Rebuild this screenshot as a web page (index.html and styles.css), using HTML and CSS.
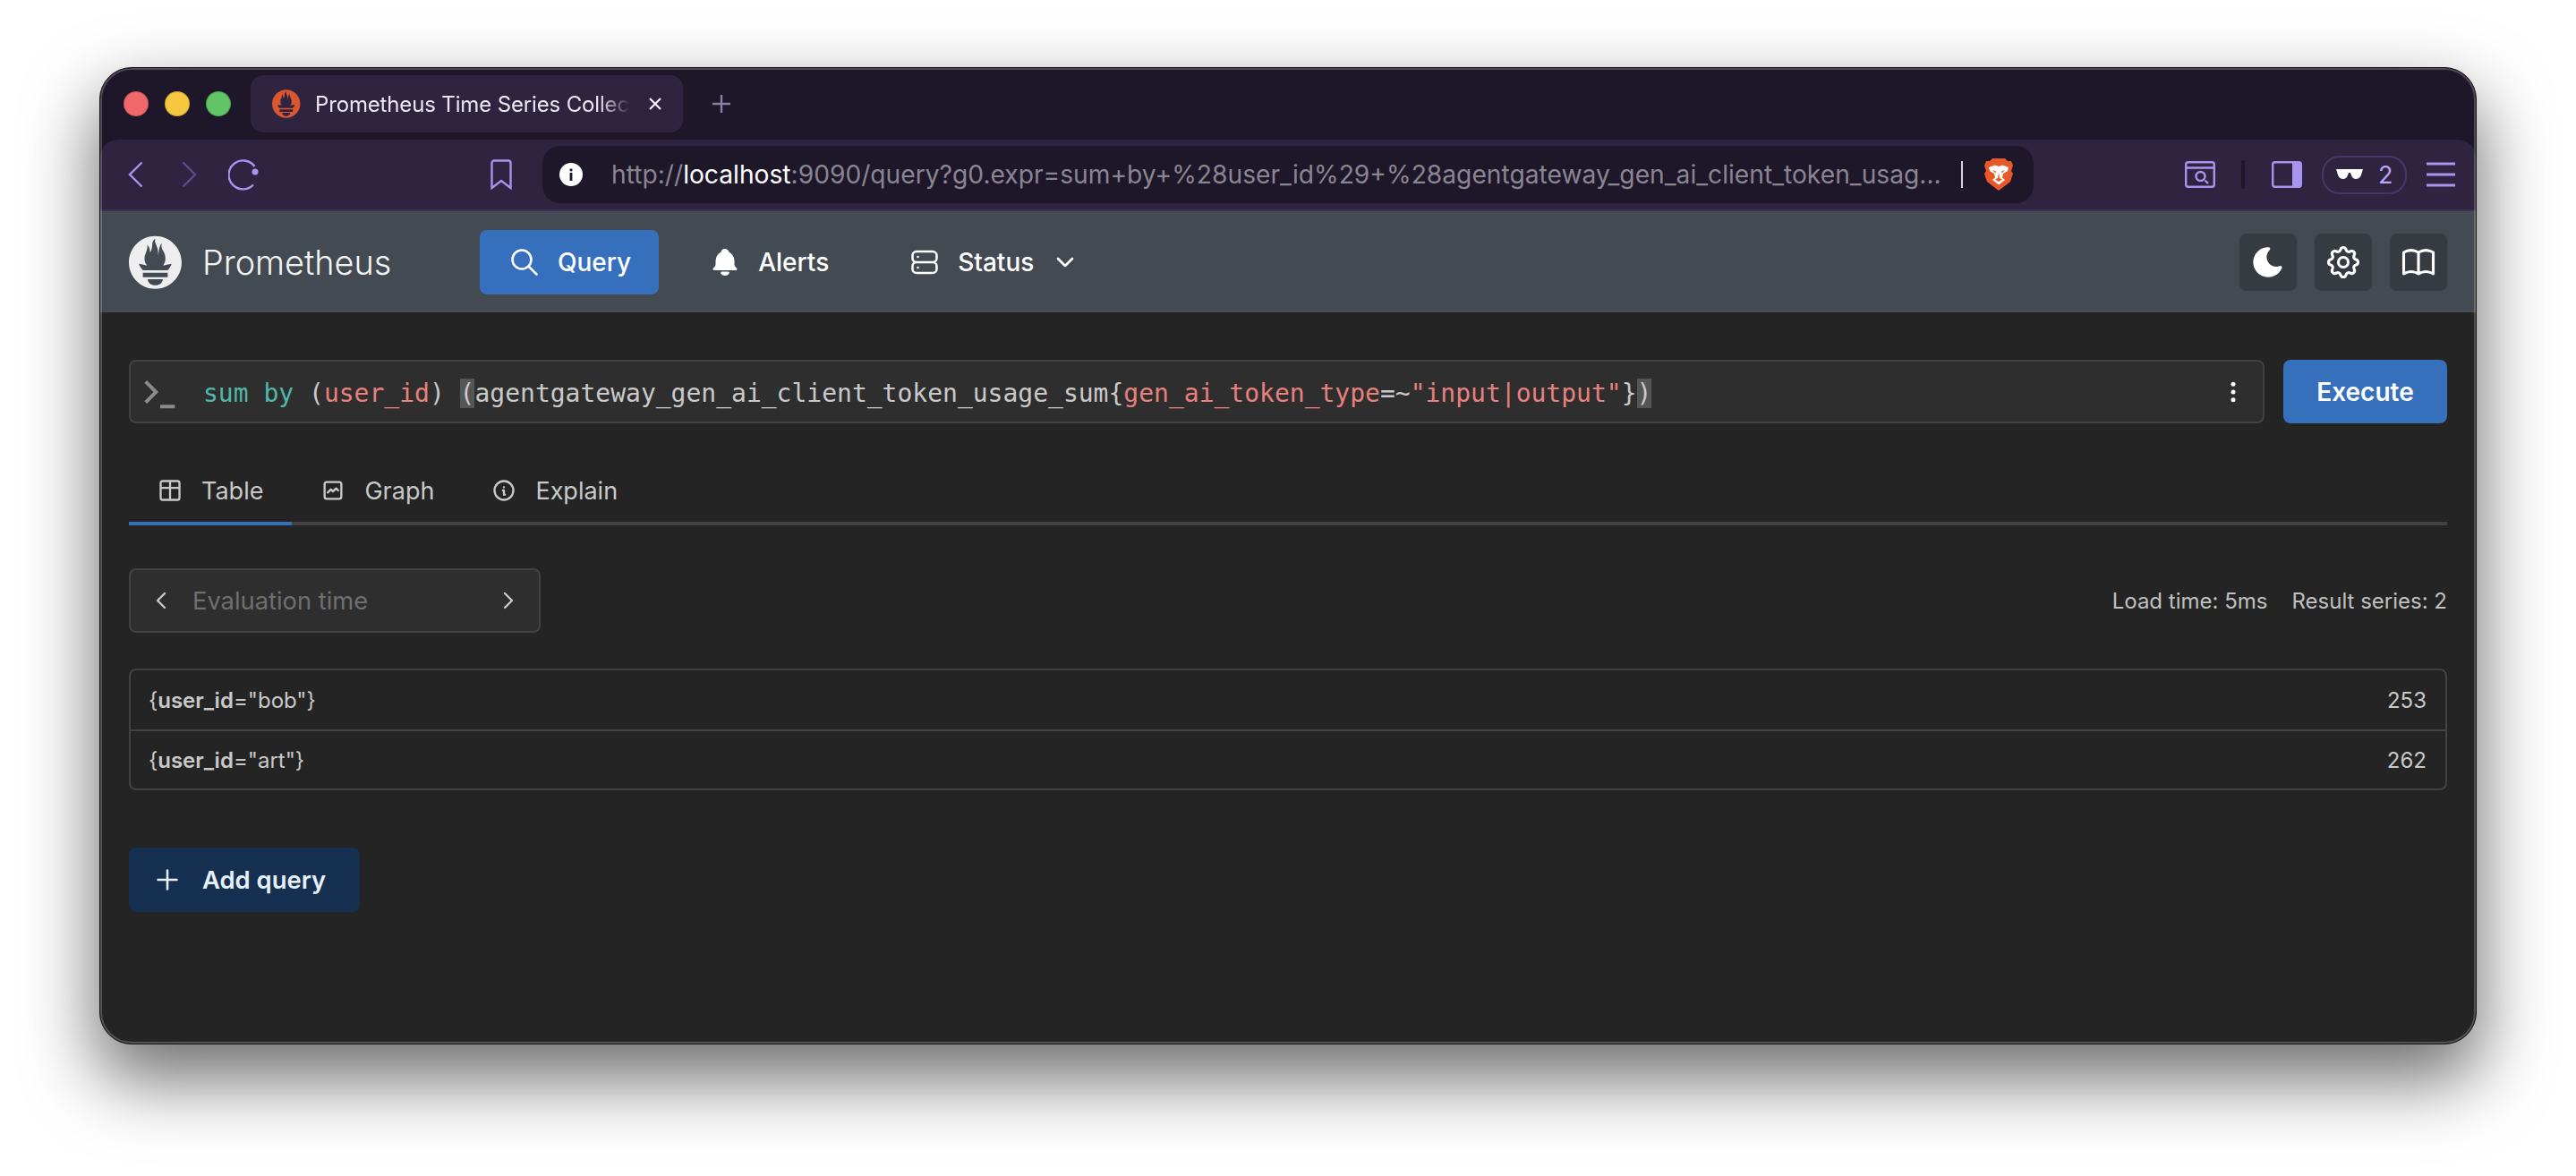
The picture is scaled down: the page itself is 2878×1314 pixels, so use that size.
FILE: index.html
```html
<!DOCTYPE html>
<html lang="en">
<head>
    <meta charset="UTF-8">
    <title>Prometheus Time Series Collection and Processing Server</title>
    <link rel="stylesheet" href="styles.css">
</head>
<body>
    <svg class="defs" width="0" height="0">
        <symbol id="prom" viewBox="0 0 115.333 114">
            <path fill-rule="evenodd" d="M56.667.667C25.372.667 0 26.036 0 57.332c0 31.295 25.372 56.666 56.667 56.666s56.666-25.371 56.666-56.666C113.333 26.036 87.961.667 56.667.667zm0 106.055c-8.904 0-16.123-5.948-16.123-13.283H72.79c0 7.334-7.219 13.283-16.123 13.283zM83.297 89.04H30.034V79.382h53.264v9.658zm-.191-14.629H30.186c-.176-.203-.356-.403-.526-.609-5.452-6.62-6.736-10.076-7.983-13.598-.021-.116 6.611 1.355 11.314 2.413 0 0 2.42.56 5.958 1.205-3.397-3.982-5.414-9.044-5.414-14.218 0-11.359 8.712-21.285 5.569-29.308 3.059.249 6.331 6.456 6.552 16.161 3.252-4.494 4.613-12.701 4.613-17.733 0-5.21 3.433-11.262 6.867-11.469-3.061 5.045.793 9.37 4.219 20.099 1.285 4.03 1.121 10.812 2.113 15.113.329-8.933 1.865-21.967 7.533-26.467-2.5 5.667.37 12.758 2.333 16.167 3.167 5.5 5.087 9.667 5.087 17.548 0 5.284-1.951 10.259-5.242 14.148 3.742-.702 6.326-1.335 6.326-1.335l12.152-2.371c.001-.001-1.765 7.261-8.55 14.254z"/>
        </symbol>
    </svg>

    <div class="window">
        <div class="tabstrip">
            <span class="light red"></span>
            <span class="light yellow"></span>
            <span class="light green"></span>
            <div class="tab">
                <svg class="favicon"><use href="#prom"/></svg>
                <span class="tab-title">Prometheus Time Series Collection and Processing Server</span>
                <svg class="tab-close" viewBox="0 0 16 16"><path d="M2 2l12 12M14 2L2 14"/></svg>
            </div>
            <svg class="tab-new" viewBox="0 0 22 22"><path d="M11 1v20M1 11h20"/></svg>
        </div>

        <div class="toolbar">
            <svg class="tb-back" viewBox="0 0 17 30"><path d="M15.5 1.5L2 15l13.5 13.5"/></svg>
            <svg class="tb-forward" viewBox="0 0 17 30"><path d="M1.5 1.5L15 15 1.5 28.5"/></svg>
            <svg class="tb-reload" viewBox="0 0 34 36">
                <path d="M29.5 9A16 16 0 1 0 28 29.5"/>
                <circle class="solid" cx="30" cy="15" r="3.5"/>
            </svg>
            <svg class="tb-bookmark" viewBox="0 0 24 34"><path d="M4 1.5h16a2.5 2.5 0 0 1 2.5 2.5v28L12 24 1.5 32V4A2.5 2.5 0 0 1 4 1.5z"/></svg>
            <div class="urlbar">
                <svg class="url-info" viewBox="0 0 26 26">
                    <circle cx="13" cy="13" r="13" fill="#fff"/>
                    <rect x="11.6" y="11" width="2.8" height="9" fill="#1e1629"/>
                    <rect x="11.6" y="6.5" width="2.8" height="2.8" fill="#1e1629"/>
                </svg>
                <span class="url-text">http://<b>localhost</b>:9090/query?g0.expr=sum+by+%28user_id%29+%28agentgateway_gen_ai_client_token_usag…</span>
                <span class="url-sep"></span>
                <svg class="url-brave" viewBox="0 0 32 36">
                    <path fill="#e8592a" d="M9 0h14l3 3 4 0 2 5-2 6 2 3-3 9-9 7-4 3-4-3-9-7-3-9 2-3-2-6 2-5 4 0z"/>
                    <path fill="#fff" d="M5 10l7-2.5 4 1.5 4-1.5 7 2.500-1 4-5 3-1 4.500 3 2.500-7 5.500-7-5.500 3-2.500-1-4.500-5-3z"/>
                    <path fill="#e8592a" d="M9 13l4 1.500-.5 2zM23 13l-4 1.500.5 2zM16 16l-1 6-3 1.500 4 2.500 4-2.500-3-1.500z"/>
                </svg>
            </div>
            <svg class="tb-find" viewBox="0 0 34 30">
                <rect x="1.2" y="1.2" width="31.6" height="27.6" rx="2.5"/>
                <path d="M1.2 7.5h31.6M22.500 21.500l3.500 3.500"/>
                <circle cx="17.500" cy="17" r="5"/>
            </svg>
            <span class="tb-sep"></span>
            <svg class="tb-sidebar" viewBox="0 0 34 30">
                <rect x="1.2" y="1.2" width="31.6" height="27.6" rx="2.5"/>
                <path class="solid" d="M23 1.2h7.3a2.5 2.5 0 0 1 2.5 2.5v22.6a2.5 2.5 0 0 1-2.5 2.5H23z"/>
            </svg>
            <div class="wallet-pill">
                <svg class="glasses" viewBox="0 0 30 12"><path d="M0 0h30l-1 3c-1 5-3 8-7 8s-5-4-6-7h-2c-1 3-2 7-6 7S2 8 1 3z"/></svg>
                <span>2</span>
            </div>
            <svg class="tb-menu" viewBox="0 0 32 28"><path d="M0 2h32M0 14h32M0 26h32"/></svg>
        </div>

        <nav class="app-nav">
            <svg class="brand-logo"><use href="#prom"/></svg>
            <span class="brand-name">Prometheus</span>
            <a class="nav-link active">
                <svg class="ic" viewBox="0 0 24 24"><path d="M3 10a7 7 0 1 0 14 0a7 7 0 1 0-14 0M21 21l-6-6"/></svg>
                Query
            </a>
            <a class="nav-link">
                <svg class="ic ic-fill" viewBox="0 0 24 24"><path d="M14.235 19c.865 0 1.322 1.024 .745 1.668a3.992 3.992 0 0 1-2.98 1.332a3.992 3.992 0 0 1-2.98-1.332c-.552-.616-.158-1.579 .634-1.661l.11-.006h4.471zM12 2c1.358 0 2.506 .903 2.875 2.141l.046 .171l.008 .043a8.013 8.013 0 0 1 4.024 6.069l.028 .287l.019 .289v2.931l.021 .136a3 3 0 0 0 1.143 1.847l.167 .117l.162 .099c.86 .487 .56 1.766-.377 1.864l-.116 .006h-16c-1.028 0-1.387-1.364-.493-1.87a3 3 0 0 0 1.472-2.063l.021-.143l.001-2.97a8 8 0 0 1 3.821-6.454l.248-.146l.01-.043a3.003 3.003 0 0 1 2.562-2.29l.182-.017l.176-.004z"/></svg>
                Alerts
            </a>
            <a class="nav-link">
                <svg class="ic" viewBox="0 0 24 24"><path d="M6 4h12a3 3 0 0 1 3 3v2a3 3 0 0 1-3 3H6a3 3 0 0 1-3-3V7a3 3 0 0 1 3-3zM6 12h12a3 3 0 0 1 3 3v2a3 3 0 0 1-3 3H6a3 3 0 0 1-3-3v-2a3 3 0 0 1 3-3zM7 8v.01M7 16v.01"/></svg>
                Status
                <svg class="ic-small" viewBox="0 0 24 24"><path d="M6 9l6 6l6-6"/></svg>
            </a>
            <div class="nav-actions">
                <button class="square-btn">
                    <svg class="ic ic-fill moon" viewBox="0 0 24 24"><path d="M12 1.992a10 10 0 1 0 9.236 13.838c.341-.82-.476-1.644-1.298-1.31a6.5 6.5 0 0 1-6.864-10.787l.077-.08c.551-.63 .113-1.653-.758-1.653h-.266l-.068-.006l-.06-.002z"/></svg>
                </button>
                <button class="square-btn">
                    <svg class="ic big" viewBox="0 0 24 24"><path d="M10.325 4.317c.426-1.756 2.924-1.756 3.35 0a1.724 1.724 0 0 0 2.573 1.066c1.543-.94 3.31 .826 2.37 2.37a1.724 1.724 0 0 0 1.065 2.572c1.756 .426 1.756 2.924 0 3.35a1.724 1.724 0 0 0-1.066 2.573c.94 1.543-.826 3.31-2.37 2.37a1.724 1.724 0 0 0-2.572 1.065c-.426 1.756-2.924 1.756-3.35 0a1.724 1.724 0 0 0-2.573-1.066c-1.543 .94-3.31-.826-2.37-2.37a1.724 1.724 0 0 0-1.065-2.572c-1.756-.426-1.756-2.924 0-3.35a1.724 1.724 0 0 0 1.066-2.573c-.94-1.543 .826-3.31 2.37-2.37c1 .608 2.296 .07 2.572-1.065zM9 12a3 3 0 1 0 6 0a3 3 0 0 0-6 0"/></svg>
                </button>
                <button class="square-btn">
                    <svg class="ic big" viewBox="0 0 24 24"><path d="M3 19a9 9 0 0 1 9 0a9 9 0 0 1 9 0M3 6a9 9 0 0 1 9 0a9 9 0 0 1 9 0M3 6v13M12 6v13M21 6v13"/></svg>
                </button>
            </div>
        </nav>

        <main class="main">
            <div class="query-row">
                <div class="expr-input">
                    <svg class="prompt" viewBox="0 0 24 24"><path d="M5 7l5 5l-5 5M12 19h7"/></svg>
                    <code class="expr"><span class="kw">sum by</span> (<span class="lbl">user_id</span>) <span class="hl">(</span>agentgateway_gen_ai_client_token_usage_sum{<span class="lbl">gen_ai_token_type</span>=~<span class="lbl">"input|output"</span>}<span class="hl">)</span></code>
                    <svg class="expr-menu" viewBox="0 0 24 24"><circle cx="12" cy="5" r="2"/><circle cx="12" cy="12" r="2"/><circle cx="12" cy="19" r="2"/></svg>
                </div>
                <button class="execute-btn">Execute</button>
            </div>

            <div class="tabs">
                <a class="tab-item selected">
                    <svg class="ic" viewBox="0 0 24 24"><path d="M3 5a2 2 0 0 1 2-2h14a2 2 0 0 1 2 2v14a2 2 0 0 1-2 2H5a2 2 0 0 1-2-2zM3 9.500h18M12 3v18"/></svg>
                    Table
                </a>
                <a class="tab-item">
                    <svg class="ic" viewBox="0 0 24 24"><path d="M4 18V6a2 2 0 0 1 2-2h12a2 2 0 0 1 2 2v12a2 2 0 0 1-2 2H6a2 2 0 0 1-2-2zM7 14l3-3l2 2l3-3l2 2"/></svg>
                    Graph
                </a>
                <a class="tab-item">
                    <svg class="ic" viewBox="0 0 24 24"><path d="M3 12a9 9 0 1 0 18 0a9 9 0 0 0-18 0M12 9h.01M11 12h1v4h1"/></svg>
                    Explain
                </a>
            </div>

            <div class="eval-row">
                <div class="eval-time">
                    <svg class="chev" viewBox="0 0 24 24"><path d="M15 6l-6 6l6 6"/></svg>
                    <span class="eval-label">Evaluation time</span>
                    <svg class="chev" viewBox="0 0 24 24"><path d="M9 6l6 6l-6 6"/></svg>
                </div>
                <div class="stats">
                    <span>Load time: 5ms</span>
                    <span>Result series: 2</span>
                </div>
            </div>

            <div class="results">
                <div class="result-row">
                    <span>{<b>user_id</b>="bob"}</span>
                    <span>253</span>
                </div>
                <div class="result-row">
                    <span>{<b>user_id</b>="art"}</span>
                    <span>262</span>
                </div>
            </div>

            <button class="add-query">
                <svg class="ic" viewBox="0 0 24 24"><path d="M12 5v14M5 12h14"/></svg>
                Add query
            </button>
        </main>
    </div>
</body>
</html>
```

FILE: styles.css
```css
* {
    box-sizing: border-box;
}
html, body {
    margin: 0;
    height: 100%;
}
body {
    background-color: #fff;
    font-family: Inter, "Liberation Sans", sans-serif;
    padding: 75px 111px 0;
    overflow: hidden;
}
.defs {
    display: block;
    height: 0;
}
svg {
    display: block;
    flex: none;
    fill: none;
}

.window {
    position: relative;
    width: 2656px;
    height: 1092px;
    border: 1px solid #111;
    border-radius: 36px;
    background-color: #1e1629;
    box-shadow: 0 36px 80px 4px rgba(0, 0, 0, 0.56);
    overflow: hidden;
    display: flex;
    flex-direction: column;
}
.window::after {
    content: "";
    position: absolute;
    inset: 0;
    border: 2px solid rgba(255, 255, 255, 0.22);
    border-radius: 35px;
    pointer-events: none;
}

/* browser chrome */
.tabstrip {
    height: 80px;
    flex: none;
    display: flex;
    align-items: center;
    padding-left: 26px;
    gap: 18px;
}
.light {
    width: 28px;
    height: 28px;
    border-radius: 50%;
    border: 1px solid rgba(0, 0, 0, 0.18);
    flex: none;
}
.light.red { background-color: #f0686a; }
.light.yellow { background-color: #f5c83f; }
.light.green { background-color: #61c566; }
.tab {
    width: 483px;
    height: 64px;
    margin-left: 4px;
    background-color: #2f2440;
    border-radius: 14px;
    display: flex;
    align-items: center;
    padding-left: 24px;
    gap: 16px;
}
.favicon {
    width: 32px;
    height: 32px;
    fill: #d9562f;
}
.tab-title {
    width: 352px;
    font-size: 24px;
    letter-spacing: -0.15px;
    color: #ece8f2;
    white-space: nowrap;
    overflow: hidden;
    -webkit-mask-image: linear-gradient(to right, #000 90%, transparent);
    mask-image: linear-gradient(to right, #000 90%, transparent);
}
.tab-close {
    width: 16px;
    height: 16px;
    margin-left: 4px;
    stroke: #f2eff6;
    stroke-width: 2.2;
}
.tab-new {
    width: 22px;
    height: 22px;
    margin-left: 14px;
    stroke: #8a7fa8;
    stroke-width: 2.4;
}

.toolbar {
    height: 80px;
    flex: none;
    background-color: #2f2440;
    border-bottom: 2px solid #3f3058;
    border-radius: 20px 20px 0 0;
    display: flex;
    align-items: center;
    padding-left: 31px;
}
.toolbar svg {
    stroke: #a794ee;
    stroke-width: 2.4;
}
.toolbar .solid {
    fill: #a794ee;
    stroke: none;
}
.tb-back, .tb-forward {
    width: 17px;
    height: 30px;
}
.toolbar .tb-forward {
    margin-left: 43px;
    stroke: #5b4c8c;
}
.tb-reload {
    width: 34px;
    height: 36px;
    margin-left: 35px;
}
.tb-bookmark {
    width: 24px;
    height: 34px;
    margin-left: 259px;
}
.urlbar {
    width: 1666px;
    height: 64px;
    margin-left: 34px;
    background-color: #1e1629;
    border-radius: 20px;
    display: flex;
    align-items: center;
    padding-left: 19px;
}
.toolbar .url-info {
    width: 26px;
    height: 26px;
    stroke: none;
}
.url-text {
    width: 1490px;
    margin-left: 32px;
    font-size: 28.2px;
    color: #8b8592;
    white-space: nowrap;
    overflow: hidden;
}
.url-text b {
    font-weight: 400;
    color: #fff;
}
.url-sep {
    width: 2px;
    height: 30px;
    margin-left: 18px;
    background-color: #d8d4de;
}
.toolbar .url-brave {
    width: 32px;
    height: 36px;
    margin-left: 24px;
    stroke: none;
}
.tb-find, .tb-sidebar {
    width: 34px;
    height: 30px;
}
.tb-find {
    margin-left: 169px;
}
.tb-sep {
    width: 4px;
    height: 32px;
    margin-left: 29px;
    border-radius: 2px;
    background-color: #1e1629;
}
.tb-sidebar {
    margin-left: 30px;
}
.wallet-pill {
    width: 95px;
    height: 43px;
    margin-left: 22px;
    border: 2px solid #46376a;
    border-radius: 20px;
    display: flex;
    align-items: center;
    padding-left: 14px;
    gap: 17px;
    font-size: 27px;
    color: #b7a6f2;
}
.toolbar .glasses {
    width: 30px;
    height: 12px;
    fill: #fff;
    stroke: none;
}
.tb-menu {
    width: 32px;
    height: 28px;
    margin-left: 22px;
}
.toolbar .tb-menu {
    stroke-width: 3;
}

/* prometheus nav */
.app-nav {
    height: 113px;
    flex: none;
    background-color: #434a52;
    border-bottom: 2px solid #484b4f;
    display: flex;
    align-items: center;
    padding: 3px 32px 0;
    color: #fff;
}
.brand-logo {
    width: 60px;
    height: 60px;
    fill: #eee;
}
.brand-name {
    margin-left: 22px;
    font-size: 37.8px;
    font-weight: 300;
    color: #f4f4f4;
    width: 310px;
}
.nav-link {
    height: 72px;
    padding: 0 31px 0 32px;
    border-radius: 8px;
    display: flex;
    align-items: center;
    gap: 19px;
    font-size: 28px;
    font-weight: 500;
    margin-right: 26px;
}
.nav-link.active {
    margin-right: 24px;
    background-color: #3670bd;
}
.nav-link .ic {
    width: 36px;
    height: 36px;
    stroke-width: 1.7;
}
.ic {
    width: 30px;
    height: 30px;
    stroke: currentColor;
    stroke-width: 2;
    stroke-linecap: round;
    stroke-linejoin: round;
}
.ic-fill {
    fill: currentColor;
    stroke: none;
}
.ic.big {
    width: 44px;
    height: 44px;
    stroke-width: 1.7;
}
.ic.moon {
    width: 40px;
    height: 40px;
}
.ic-small {
    width: 32px;
    height: 32px;
    stroke: currentColor;
    stroke-width: 2;
    stroke-linecap: round;
    stroke-linejoin: round;
}
.nav-actions {
    margin-left: auto;
    display: flex;
    gap: 20px;
}
.square-btn {
    width: 64px;
    height: 64px;
    padding: 0;
    border: none;
    border-radius: 8px;
    background-color: #363b42;
    color: #fff;
    display: flex;
    align-items: center;
    justify-content: center;
}

/* query panel */
.main {
    flex: 1;
    padding: 53px 32px 0;
    background-color: #242424;
    color: #c9c9c9;
}
.query-row {
    display: flex;
    gap: 21px;
}
.expr-input {
    flex: 1;
    height: 71px;
    background-color: #2e2e2e;
    border: 2px solid #424242;
    border-radius: 8px;
    display: flex;
    align-items: center;
    padding: 0 14px 0 5px;
}
.prompt {
    width: 56px;
    height: 56px;
    stroke: #8a8a8a;
    stroke-width: 1.7;
}
.expr {
    flex: 1;
    margin-left: 20px;
    padding-top: 3px;
    font-family: "DejaVu Sans Mono", monospace;
    font-size: 28px;
    color: #c9c9c9;
    white-space: pre;
}
.kw { color: #4fb8a8; }
.lbl { color: #e8807c; }
.hl { background-color: #555; }
.expr-menu {
    width: 30px;
    height: 30px;
    fill: #fff;
    margin-right: 4px;
}
.execute-btn {
    width: 183px;
    height: 71px;
    border: none;
    border-radius: 8px;
    background-color: #3670bd;
    color: #fff;
    font-family: inherit;
    font-size: 28px;
    font-weight: 600;
}

.tabs {
    display: flex;
    margin-top: 36px;
    border-bottom: 4px solid #424242;
}
.tab-item {
    height: 78px;
    margin-bottom: -4px;
    padding: 4px 32px 0;
    border-bottom: 4px solid transparent;
    display: flex;
    align-items: center;
    gap: 21px;
    font-size: 27px;
}
.tab-item .ic {
    width: 28px;
    height: 28px;
}
.tab-item.selected {
    border-bottom-color: #3670bd;
}

.eval-row {
    display: flex;
    align-items: center;
    justify-content: space-between;
    margin-top: 48px;
}
.eval-time {
    width: 460px;
    height: 72px;
    background-color: #2e2e2e;
    border: 2px solid #424242;
    border-radius: 8px;
    display: flex;
    align-items: center;
    padding: 0 18px;
    gap: 19px;
}
.chev {
    width: 32px;
    height: 32px;
    stroke: #c9c9c9;
    stroke-width: 1.8;
    stroke-linecap: round;
    stroke-linejoin: round;
}
.eval-label {
    flex: 1;
    font-size: 27.3px;
    color: #6f6f6f;
}
.stats {
    display: flex;
    gap: 27px;
    font-size: 24px;
    color: #c0c0c0;
}

.results {
    margin-top: 40px;
    border: 2px solid #424242;
    border-radius: 8px;
}
.result-row {
    height: 66px;
    display: flex;
    align-items: center;
    justify-content: space-between;
    padding: 0 21px 0 20px;
    font-size: 24px;
    color: #c9c9c9;
}
.result-row + .result-row {
    border-top: 2px solid #424242;
}
.result-row b {
    font-weight: 600;
}

.add-query {
    margin-top: 64px;
    width: 258px;
    height: 72px;
    border: none;
    border-radius: 8px;
    background-color: #153050;
    color: #e7f0fa;
    display: flex;
    align-items: center;
    padding: 0 0 0 25px;
    gap: 21px;
    font-family: inherit;
    font-size: 27.4px;
    font-weight: 600;
}
.add-query .ic {
    width: 36px;
    height: 36px;
    stroke-width: 1.7;
}
```
